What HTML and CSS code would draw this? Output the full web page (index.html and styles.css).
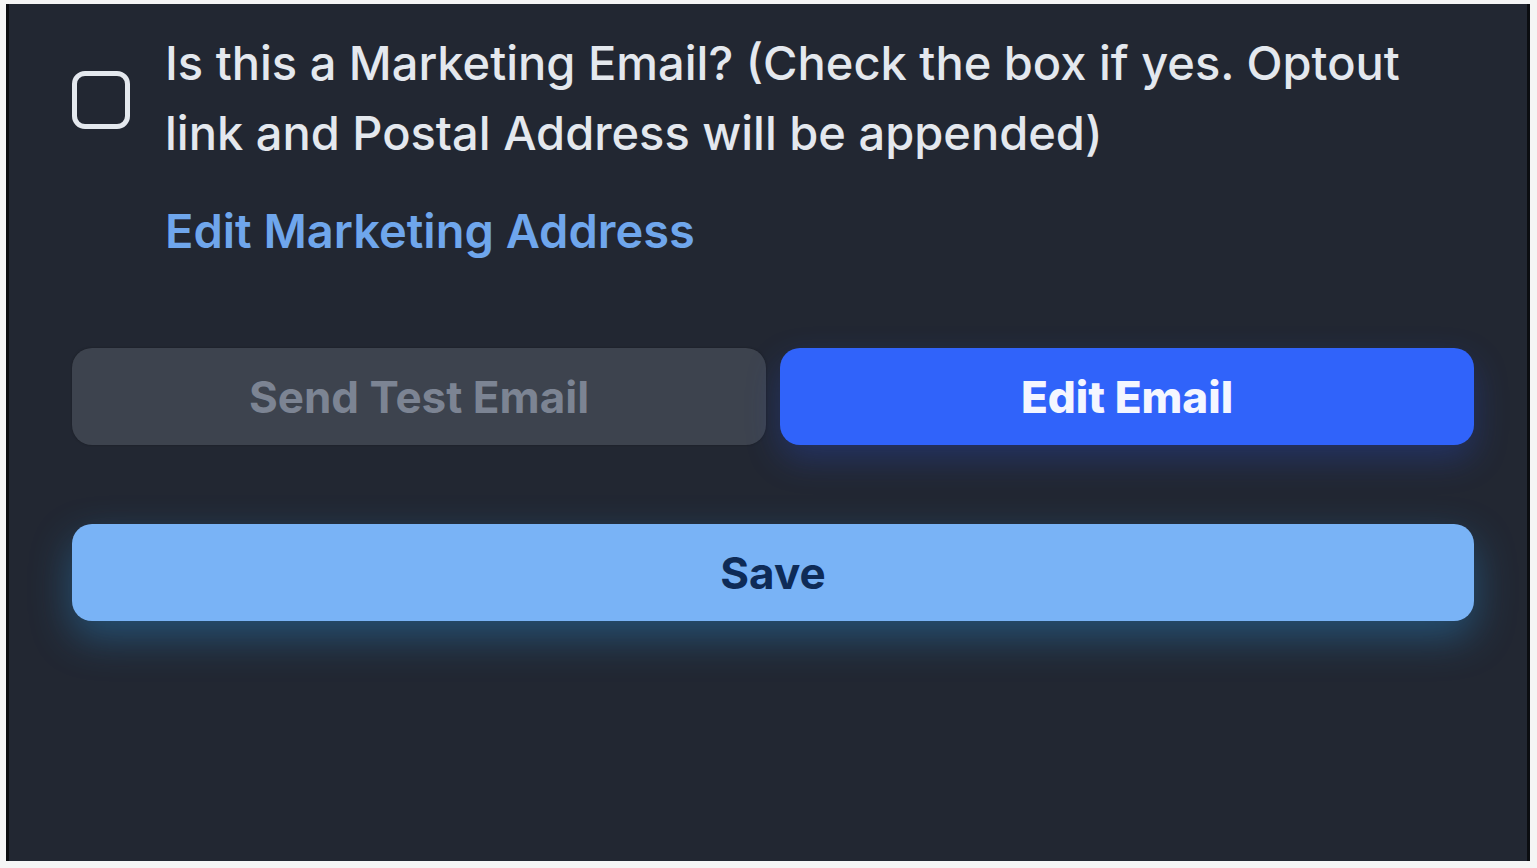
FILE: index.html
```html
<!DOCTYPE html>
<html lang="en">
<head>
    <meta charset="UTF-8">
    <title>Email Settings</title>
    <link rel="stylesheet" href="styles.css">
</head>
<body>

    <div id="frame">
        <div class="panel">
            <label class="marketing">
                <input type="checkbox" class="check">
                <span class="check-box"></span>
                <span class="check-text">Is this a Marketing Email? (Check the box if yes. Optout link and Postal Address will be appended)</span>
            </label>

            <a href="javascript:void(0)" class="address">Edit Marketing Address</a>

            <div class="actions">
                <a href="javascript:void(0)" class="btn btn-test">Send Test Email</a>
                <a href="javascript:void(0)" class="btn btn-edit">Edit Email</a>
            </div>

            <a href="javascript:void(0)" class="btn btn-save">Save</a>
        </div>
    </div>

</body>
</html>
```

FILE: styles.css
```css
*{margin: 0;padding: 0;box-sizing: border-box;}
a{text-decoration: none;}
body{background: #f5f5f5; font-family: "Inter", "Open Sans", sans-serif;}

#frame{padding: 4px 7px 7px 6px;}
.panel{height: 857px; background: #222732; border-left: 3px solid #0b0d11; border-right: 3px solid #0b0d11; padding: 24px 53px 0 63px;}

/* checkbox row */
.marketing{display: flex; align-items: center; gap: 35px; cursor: pointer;}
.check{display: none;}
.check-box{flex: none; width: 58px; height: 58px; margin-top: 4px; border: 5px solid #e4e8ee; border-radius: 13px;}
.check:checked + .check-box{background: #3063fa; border-color: #3063fa;}
.check-text{color: #e4e8ee; font-size: 47px; font-weight: 500; line-height: 70px;}

.address{display: block; margin: 28px 0 0 93px; color: #6fa6ec; font-size: 47px; font-weight: 600; line-height: 70px;}

/* buttons */
.actions{display: flex; gap: 14px; margin-top: 82px;}
.btn{display: flex; align-items: center; justify-content: center; height: 97px; border-radius: 20px; font-size: 44px; font-weight: 700;}
.actions .btn{flex: 1;}
.btn-test{background: #3d434e; color: #7c8493; box-shadow: 0 0 2px #181b22;}
.btn-edit{background: #3063fa; color: #f4f6ff; font-weight: 800; box-shadow: 0 14px 34px rgba(40, 80, 220, .3);}
.btn-save{margin-top: 79px; background: #79b3f6; color: #0e2b57; box-shadow: 0 16px 40px rgba(40, 140, 210, .42);}
```
